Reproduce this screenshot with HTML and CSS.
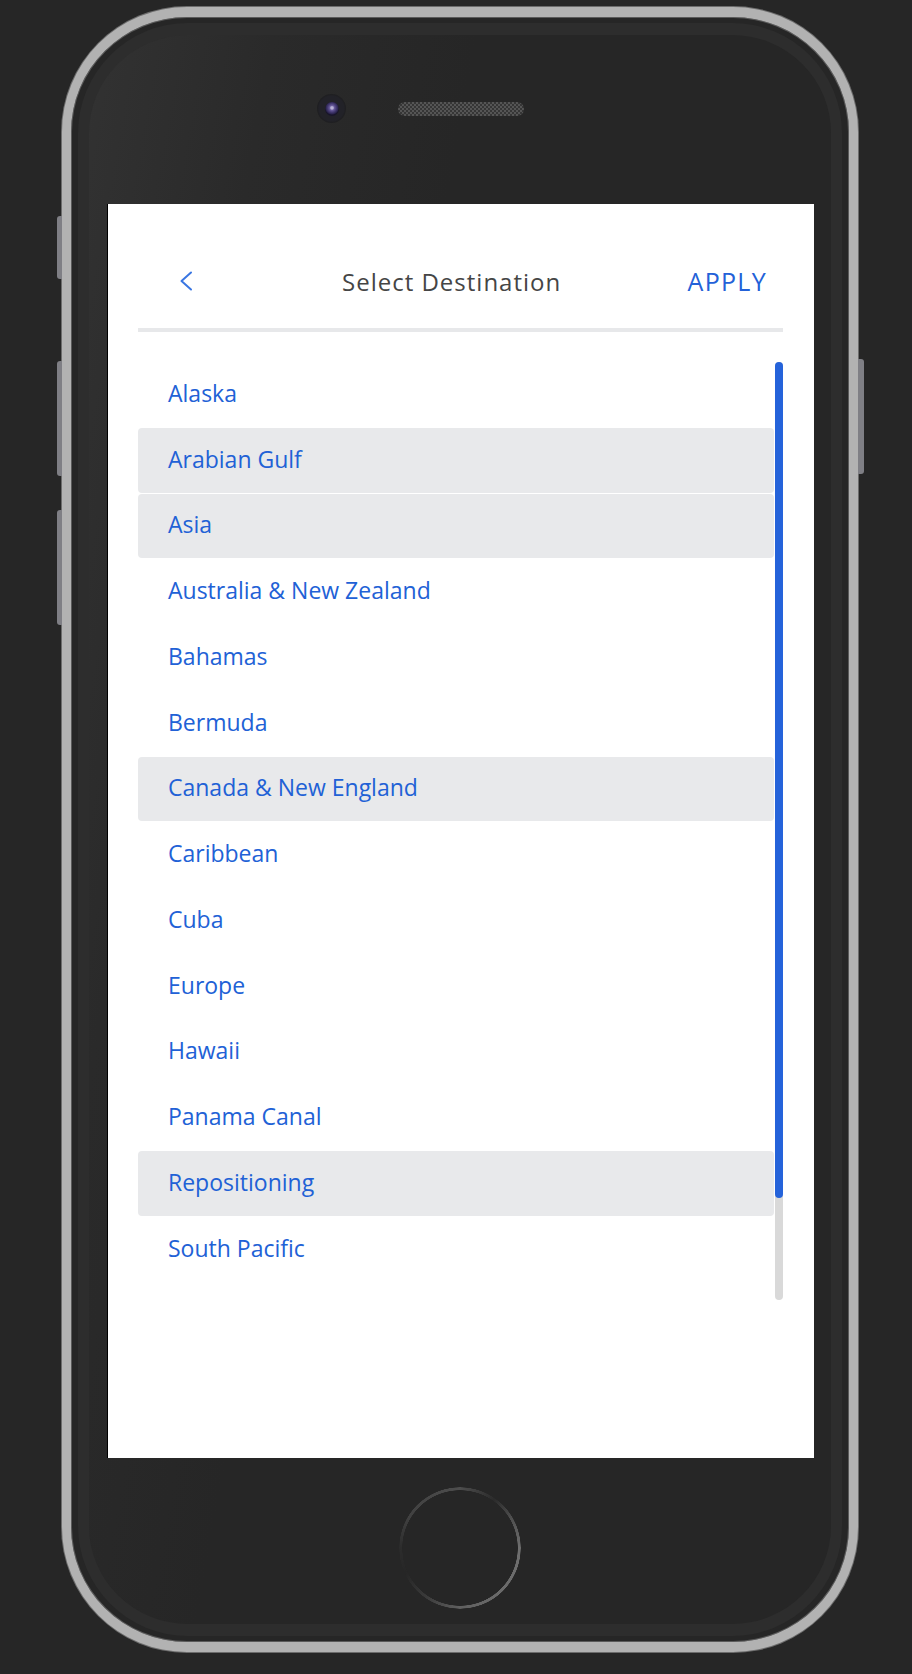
FILE: index.html
```html
<!DOCTYPE html>
<html lang="en">
<head>
<meta charset="utf-8">
<title>Select Destination</title>
<link rel="stylesheet" href="styles.css">
</head>
<body>
<div class="stage">
  <div class="phone">
    <span class="side-btn btn-l1"></span>
    <span class="side-btn btn-l2"></span>
    <span class="side-btn btn-l3"></span>
    <span class="side-btn btn-r1"></span>
    <div class="band">
      <div class="top-area">
        <div class="camera"><div class="lens"></div></div>
        <div class="speaker"></div>
      </div>
      <div class="screen">
        <header class="header">
          <div class="back">
            <svg width="14" height="20" viewBox="0 0 14 20" aria-hidden="true">
              <polyline points="12,1.5 2.5,10 12,18.5" fill="none" stroke="#3a76e2" stroke-width="2" stroke-linecap="round" stroke-linejoin="round"/>
            </svg>
          </div>
          <div class="title">Select Destination</div>
          <div class="apply">APPLY</div>
        </header>
        <div class="divider"></div>
        <div class="list-wrap">
          <ul class="list">
            <li class="item">Alaska</li>
            <li class="item item-hl">Arabian Gulf</li>
            <li class="item item-hl">Asia</li>
            <li class="item">Australia &amp; New Zealand</li>
            <li class="item">Bahamas</li>
            <li class="item">Bermuda</li>
            <li class="item item-hl">Canada &amp; New England</li>
            <li class="item">Caribbean</li>
            <li class="item">Cuba</li>
            <li class="item">Europe</li>
            <li class="item">Hawaii</li>
            <li class="item">Panama Canal</li>
            <li class="item item-hl">Repositioning</li>
            <li class="item">South Pacific</li>
          </ul>
          <div class="scroll"><div class="thumb"></div></div>
        </div>
      </div>
      <div class="bottom-area">
        <div class="home"></div>
      </div>
    </div>
  </div>
</div>
</body>
</html>
```

FILE: styles.css
```css
* { box-sizing: border-box; }

html, body {
  margin: 0;
  padding: 0;
  background: #262626;
}

body {
  width: 912px;
  height: 1674px;
  overflow: hidden;
  font-family: "Open Sans", "Liberation Sans", sans-serif;
}

.stage {
  padding: 7px 0 0 62px;
}

.phone {
  position: relative;
  width: 796px;
  height: 1645px;
  border-style: solid;
  border-color: #b2b2b2;
  border-width: 10px 9px;
  border-radius: 125px;
  padding: 6px 7px;
  background: #262626;
  box-shadow: 0 0 0 1px #6c6c6c, inset 0 0 0 1px #5a5a5a;
}

.side-btn {
  position: absolute;
  width: 5px;
  background: #7f7f85;
}
.btn-l1 { left: -14px; top: 199px; height: 63px; border-radius: 3px 0 0 3px; }
.btn-l2 { left: -14px; top: 344px; height: 115px; border-radius: 3px 0 0 3px; }
.btn-l3 { left: -14px; top: 493px; height: 115px; border-radius: 3px 0 0 3px; }
.btn-r1 { left: 787px; top: 342px; height: 115px; width: 6px; border-radius: 0 3px 3px 0; }

.band {
  height: 100%;
  border-style: solid;
  border-width: 12px 11px;
  border-color: #2d2d2d;
  border-radius: 110px;
  background: linear-gradient(100deg, #323232 0%, #2a2a2a 18%, #262626 38%);
  display: flex;
  flex-direction: column;
}

.top-area {
  height: 169px;
  flex: 0 0 169px;
  display: flex;
  align-items: center;
  align-self: stretch;
  padding: 59px 0 0 228px;
  align-content: flex-start;
}
.top-area { align-items: flex-start; }

.camera {
  width: 29px;
  height: 29px;
  border-radius: 50%;
  background: radial-gradient(circle, #222228 0 60%, #1c1c1c 75%, #202020 100%);
  display: flex;
  align-items: center;
  justify-content: center;
}
.lens {
  width: 14px;
  height: 14px;
  border-radius: 50%;
  background: radial-gradient(circle at 50% 42%, #b9b2d6 0 1.2px, #6a5d9c 2.4px, #4a3f7a 4px, #2c2550 6px, #18152a 7px);
}

.speaker {
  margin: 8px 0 0 52px;
  width: 126px;
  height: 14px;
  border-radius: 7px;
  background: repeating-conic-gradient(#5e5e5e 0 25%, #393939 0 50%) 0 0 / 4px 4px;
  opacity: 0.85;
}

.screen {
  flex: 0 0 1254px;
  height: 1254px;
  width: 707px;
  margin-left: 18px;
  border-left: 1px solid #000;
  background: #fff;
  padding: 0 31px 0 30px;
}

.header {
  height: 124px;
  padding: 31px 0 1px 0;
  display: flex;
  align-items: center;
}

.back {
  flex: 0 0 204px;
  padding-left: 41px;
  display: flex;
  align-items: center;
}
.back svg { display: block; }

.title {
  font-size: 24px;
  letter-spacing: 1px;
  color: #454545;
  white-space: nowrap;
}

.apply {
  margin-left: auto;
  margin-right: 16px;
  font-size: 25px;
  letter-spacing: 1.3px;
  color: #2361d8;
}

.divider {
  height: 4px;
  background: #e7e8ea;
}

.list-wrap {
  margin-top: 30px;
  height: 938px;
  display: flex;
  gap: 1px;
}

.list {
  list-style: none;
  margin: 0;
  padding: 0;
  width: 636px;
  display: flex;
  flex-direction: column;
  gap: 1px;
}

.item {
  height: 64.75px;
  flex: 0 0 64.75px;
  display: flex;
  align-items: center;
  padding: 0 0 3px 30px;
  border-radius: 4px;
  font-size: 23px;
  color: #2161d6;
  white-space: nowrap;
}

.item-hl {
  background: #e8e9eb;
}

.scroll {
  width: 8px;
  height: 938px;
  border-radius: 4px;
  background: #d9d9d9;
}

.thumb {
  height: 836px;
  border-radius: 4px;
  background: #2563da;
}

.bottom-area {
  flex: 1 1 auto;
  display: flex;
  justify-content: center;
  padding-top: 29px;
}

.home {
  width: 122px;
  height: 122px;
  border-radius: 50%;
  background: conic-gradient(from 0deg,
    #4d4d4d 0deg, #2b2b2b 35deg, #4f4f4f 60deg, #6f6f6f 90deg,
    #6a6a6a 140deg, #606060 180deg, #3a3a3a 215deg, #262626 245deg,
    #2c2c2c 270deg, #404040 300deg, #4d4d4d 360deg);
  -webkit-mask: radial-gradient(circle, transparent 57.5px, #000 58px, #000 60.5px, transparent 61px);
  mask: radial-gradient(circle, transparent 57.5px, #000 58px, #000 60.5px, transparent 61px);
}
```
